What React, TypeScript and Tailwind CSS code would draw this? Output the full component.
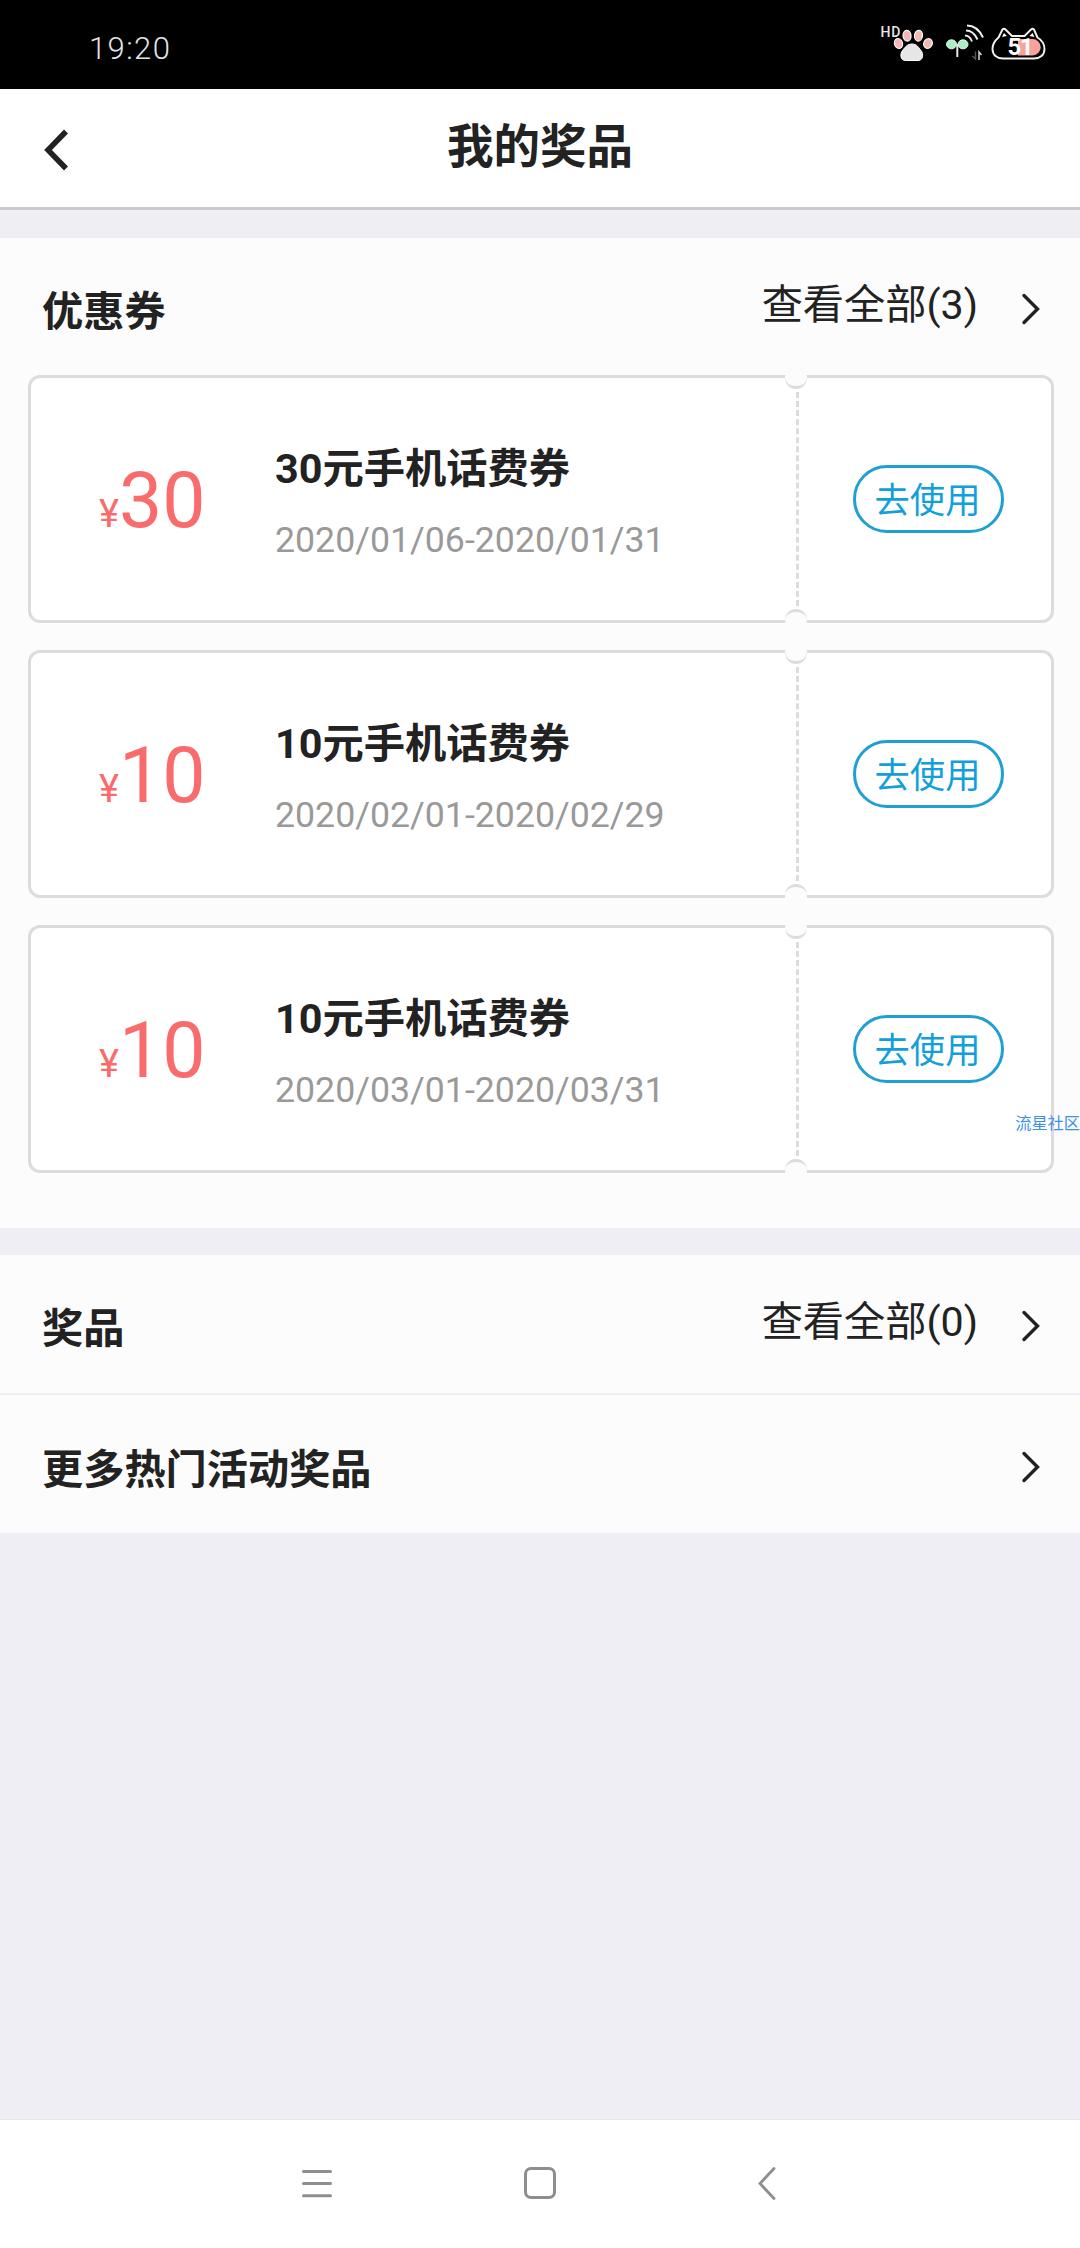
import React from "react";

type Coupon = {
  id: number;
  amount: number;
  title: string;
  period: string;
};

const coupons: Coupon[] = [
  { id: 1, amount: 30, title: "30元手机话费券", period: "2020/01/06-2020/01/31" },
  { id: 2, amount: 10, title: "10元手机话费券", period: "2020/02/01-2020/02/29" },
  { id: 3, amount: 10, title: "10元手机话费券", period: "2020/03/01-2020/03/31" },
];

function StatusBar() {
  return (
    <div className="flex h-[89px] items-center justify-between bg-black pr-[28px] pl-[89px]">
      <span className="mt-[8px] text-[31px] leading-[36px] font-light tracking-[1.4px] text-[#e4e4e4]">
        19:20
      </span>
      <svg className="h-[90px] w-[172px]" viewBox="880 0 172 90" fill="none">
        <text x="880.5" y="37" fontSize="14" fontWeight="500" letterSpacing="0.8" fill="#e6e6e6">
          HD
        </text>
        {/* paw */}
        <g fill="#f4b8b4" stroke="#fff" strokeWidth="1.2">
          <ellipse cx="898.5" cy="43.5" rx="4" ry="5" transform="rotate(-20 898.5 43.5)" />
          <ellipse cx="907" cy="35.7" rx="4" ry="5.4" transform="rotate(-6 907 35.7)" />
          <ellipse cx="918.5" cy="35.7" rx="4" ry="5.4" transform="rotate(8 918.5 35.7)" />
          <ellipse cx="928" cy="43.5" rx="4.2" ry="5" transform="rotate(25 928 43.5)" />
        </g>
        <path
          d="M912 44c5 0 6.500 3.500 9 6.500 2.500 3 2.500 10-3 10h-12.500c-5.500 0-5.500-7-3-10 2.500-3 4.500-6.500 9.500-6.500z"
          fill="#e6e6e6"
          stroke="#fff"
        />
        {/* sprout and signal waves */}
        <ellipse cx="951.500" cy="44.300" rx="5" ry="4.500" fill="#a9efc4" stroke="#d8fbe6" />
        <ellipse cx="963" cy="44.300" rx="5" ry="4.500" fill="#a9efc4" stroke="#d8fbe6" />
        <path d="M957.300 44v13" stroke="#e8e8e8" strokeWidth="2" />
        <path
          d="M967 25.500c7.500 0 12.500 4.500 16 12M966 30.500c5 0 9 3.500 11.500 9M965 35.500c3 0 5.500 2 7 6"
          stroke="#eee"
          strokeWidth="1.900"
        />
        <path d="M975.500 51.500v7.500l-3-3" stroke="#555" strokeWidth="1.400" />
        <path d="M979 60v-8l2.500 3" stroke="#ddd" strokeWidth="1.400" />
        {/* cat battery */}
        <path d="M1018 39h14.500a8.200 8.200 0 0 1 0 16.400h-14.500z" fill="#f9a19b" />
        <path
          d="M1002.500 29.500q1.500-1.500 3 0l6.500 6.500h12.500l6.500-6.500q1.500-1.500 3 0l3.500 8c5 3 7 7.500 7 11.500 0 6-4.500 9.500-10.500 9.500h-31c-6 0-10.500-3.500-10.500-9.500 0-4 2.500-8.500 6-11.500z"
          stroke="#f2f2f2"
          strokeWidth="1.900"
          strokeLinejoin="round"
        />
        <path d="M1002 37l2-4 3 3zM1034.500 37l-2-4-3 3z" fill="#fff" />
        <text x="1007.500" y="55" fontSize="24" fontWeight="700" letterSpacing="-1.500" fill="#fff">
          51
        </text>
      </svg>
    </div>
  );
}

function Header() {
  return (
    <div className="grid h-[121px] grid-cols-[1fr_auto_1fr] items-center border-b-3 border-[#c9cacc] bg-white">
      <svg className="mt-[3px] ml-[42px] h-[46px] w-[30px]" viewBox="0 0 30 46" fill="none">
        <path d="M24 4.500L6 23l18 18.500" stroke="#222" strokeWidth="5.500" />
      </svg>
      <h1 className="-mt-[2px] text-[46.500px] leading-[60px] font-bold">我的奖品</h1>
    </div>
  );
}

function Arrow() {
  return (
    <svg className="h-[34px] w-[20px]" viewBox="0 0 20 34" fill="none">
      <path
        d="M3 3.500L16.500 17 3 30.500"
        stroke="#222"
        strokeWidth="3.400"
        strokeLinecap="round"
      />
    </svg>
  );
}

function SectionRow({ title, count }: { title: string; count?: number }) {
  return (
    <div className="flex h-[137px] items-center pt-[4px] pr-[39px] pl-[42px]">
      <h2 className="mt-[7px] flex-1 text-[41.200px] leading-[50px] font-bold">{title}</h2>
      {count !== undefined && (
        <span className="-mt-[8px] mr-[43px] text-[41.200px] leading-[50px]">查看全部({count})</span>
      )}
      <Arrow />
    </div>
  );
}

function CouponCard({ coupon }: { coupon: Coupon }) {
  return (
    <div className="relative flex h-[248px] rounded-[12px] border-3 border-[#dcdcdc] bg-white">
      <div className="flex w-[244px] items-baseline pt-[78px] pl-[68px] text-[#fa6b6b]">
        <span className="text-[38px] leading-[90px]">¥</span>
        <span className="text-[77px] leading-[90px]">{coupon.amount}</span>
      </div>
      <div className="flex-1 pt-[66px]">
        <h3 className="text-[41.300px] leading-[50px] font-bold">{coupon.title}</h3>
        <p className="mt-[25px] text-[35.700px] leading-[42px] text-[#999]">{coupon.period}</p>
      </div>
      <div className="my-[14px] border-l-3 border-dashed border-[#dcdcdc]" />
      <div className="flex w-[252px] items-center pl-[54px]">
        <button className="h-[68px] w-[151px] rounded-full border-3 border-[#20a0d0] pt-[4px] pr-[2px] text-[35.300px] leading-[58px] text-[#12a0dc]">
          去使用
        </button>
      </div>
      {/* ticket notches */}
      <div className="absolute -top-[11px] right-[244px] h-[22px] w-[22px] rounded-full border-b-3 border-[#dcdcdc] bg-[#fcfcfc]" />
      <div className="absolute right-[244px] -bottom-[11px] h-[22px] w-[22px] rounded-full border-t-3 border-[#dcdcdc] bg-[#fcfcfc]" />
    </div>
  );
}

function NavBar() {
  return (
    <div className="grid h-[129px] grid-cols-[1fr_36px_1fr] items-center border-t border-[#e6e6ea] bg-white">
      <svg className="ml-[300px] h-[36px] w-[34px]" viewBox="0 0 34 36" fill="none">
        <path
          d="M3.500 5.500h27M3.500 17.500h27M3.500 29.800h27"
          stroke="#8e8e8e"
          strokeWidth="3"
          strokeLinecap="round"
        />
      </svg>
      <svg className="h-[36px] w-[36px]" viewBox="0 0 36 36" fill="none">
        <rect x="3.500" y="2.500" width="29" height="29" rx="5.500" stroke="#8e8e8e" strokeWidth="3" />
      </svg>
      <svg className="ml-[199px] h-[36px] w-[20px]" viewBox="0 0 20 36" fill="none">
        <path
          d="M17 2.500L3 17.500l14 15"
          stroke="#8e8e8e"
          strokeWidth="2.800"
          strokeLinecap="round"
        />
      </svg>
    </div>
  );
}

function App() {
  return (
    <div className="relative flex h-[2248px] w-[1080px] flex-col overflow-hidden bg-[#eeeef4] font-['Roboto','Noto_Sans_CJK_SC',sans-serif] text-[#222]">
      <StatusBar />
      <Header />
      <div className="mt-[28px] h-[990px] bg-[#fcfcfc]">
        <SectionRow title="优惠券" count={3} />
        <div className="flex flex-col gap-[27px] pr-[26px] pl-[28px]">
          {coupons.map((coupon) => (
            <CouponCard key={coupon.id} coupon={coupon} />
          ))}
        </div>
      </div>
      <div className="mt-[27px] mb-auto flex flex-col gap-[2px]">
        <div className="bg-[#fcfcfc] pb-px">
          <SectionRow title="奖品" count={0} />
        </div>
        <div className="bg-[#fcfcfc] pt-px">
          <SectionRow title="更多热门活动奖品" />
        </div>
      </div>
      <NavBar />
      {/* floating community mark at the right edge */}
      <span className="absolute top-[1112px] right-0 text-[16.200px] leading-[24px] whitespace-nowrap text-[#3d8fe8]">
        流星社区
      </span>
    </div>
  );
}

export default App;
